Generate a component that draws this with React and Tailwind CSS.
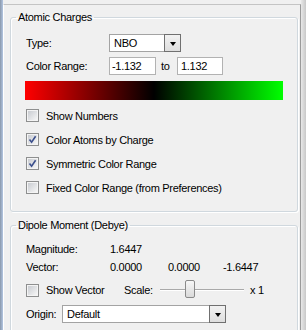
import React from "react";

const Check = ({ checked, label }) => (
  <div className="flex items-center gap-[7px] h-[13px]">
    <div className="w-[13px] h-[13px] border border-[#8e8f8f] bg-[#f4f4f4] p-px shrink-0">
      <div className="w-full h-full bg-gradient-to-br from-[#c9ccd1] to-[#f6f6f6] relative">
        {checked && (
          <svg width="11" height="11" viewBox="0 0 11 11" className="absolute -left-px -top-px">
            <path d="M2.5 5.5 L4.6 8.2 L8.6 2.2" fill="none" stroke="#3b4f8c" strokeWidth="1.6" />
          </svg>
        )}
      </div>
    </div>
    <span className="whitespace-nowrap">{label}</span>
  </div>
);

const Combo = ({ w, text }) => (
  <div className={`relative h-[18px] ${w} border border-[#a3a3a3] bg-white flex items-center pl-[4px]`}>
    <span>{text}</span>
    <div className="absolute -right-px -top-px -bottom-px w-[17px] border border-[#707070] bg-gradient-to-b from-[#f2f2f2] to-[#dedede] flex items-center justify-center">
      <div className="w-0 h-0 border-l-[3px] border-r-[3px] border-t-[4px] border-l-transparent border-r-transparent border-t-black mt-[1px]" />
    </div>
  </div>
);

const Input = ({ w, text, pl }) => (
  <div className={`h-[18px] ${w} ${pl} border border-[#b2b2b2] bg-white flex items-center`}>
    <span>{text}</span>
  </div>
);

export default function App() {
  return (
    <div className="w-[306px] h-[330px] overflow-hidden bg-[#f0f0f0] flex font-['Liberation_Sans',Arial,sans-serif] text-[11px] leading-[14px] tracking-[-0.3px] text-black">
      <div className="w-[3px] h-full bg-gradient-to-r from-[#8a98ab] to-[#b3c6e2] shrink-0" />
      <div className="mt-[4px] w-[298px] shrink-0 border-l border-l-white border-t border-t-[#c4c4c4] border-r border-r-[#9a9a9a]">
        <fieldset className="mt-[5px] ml-[6px] w-[288px] border border-[#d0d8de] rounded-[3px] shadow-[inset_1px_1px_0_#fff,1px_1px_0_#fff]">
          <legend className="ml-[5px] px-[2px] h-[14px]">Atomic Charges</legend>
          <div className="pt-[10px] pl-[15px] pb-[17px]">
            <div className="flex items-center h-[18px]">
              <span className="w-[83px]">Type:</span>
              <Combo w="w-[72px]" text="NBO" />
            </div>
            <div className="flex items-center h-[18px] mt-[5px]">
              <span className="w-[83px]">Color Range:</span>
              <Input w="w-[47px]" pl="pl-[2px]" text="-1.132" />
              <span className="w-[21px] pl-[5px]">to</span>
              <Input w="w-[46px]" pl="pl-[3px]" text="1.132" />
            </div>
            <div className="mt-[6px] -ml-px w-[258px] h-[19px] bg-[linear-gradient(to_right,#ff0000,#000000,#00ff00)]" />
            <div className="mt-[9px] flex flex-col gap-[11px]">
              <Check label="Show Numbers" />
              <Check checked label="Color Atoms by Charge" />
              <Check checked label="Symmetric Color Range" />
              <Check label="Fixed Color Range (from Preferences)" />
            </div>
          </div>
        </fieldset>
        <fieldset className="mt-[6px] ml-[6px] w-[288px] h-[120px] border border-[#d0d8de] rounded-[3px] shadow-[inset_1px_1px_0_#fff,1px_1px_0_#fff]">
          <legend className="ml-[5px] px-[2px] h-[14px]">Dipole Moment (Debye)</legend>
          <div className="pt-[10px] pl-[15px]">
            <div className="flex items-center h-[14px]">
              <span className="w-[84px]">Magnitude:</span>
              <span>1.6447</span>
            </div>
            <div className="flex items-center h-[14px] mt-[4px]">
              <span className="w-[84px]">Vector:</span>
              <span className="w-[58px]">0.0000</span>
              <span className="w-[55px]">0.0000</span>
              <span>-1.6447</span>
            </div>
            <div className="flex items-center h-[18px] mt-[7px]">
              <div className="w-[98px]">
                <Check label="Show Vector" />
              </div>
              <span className="w-[36px]">Scale:</span>
              <div className="relative w-[84px] h-[18px] flex items-center">
                <div className="w-full h-[2px] border-t border-t-[#a9a9a9] border-b border-b-white" />
                <div className="absolute left-[25px] -top-px w-[10px] h-[18px] rounded-[2px] border border-[#8a8a8a] bg-gradient-to-b from-[#f7f7f7] to-[#dadada]" />
              </div>
              <span className="ml-[6px]">x 1</span>
            </div>
            <div className="flex items-center h-[18px] mt-[6px]">
              <span className="w-[36px]">Origin:</span>
              <Combo w="w-[164px]" text="Default" />
            </div>
          </div>
        </fieldset>
      </div>
      <div className="w-[5px] h-full bg-gradient-to-r from-[#e8e8e8] to-[#c8c8c8] shrink-0" />
    </div>
  );
}
